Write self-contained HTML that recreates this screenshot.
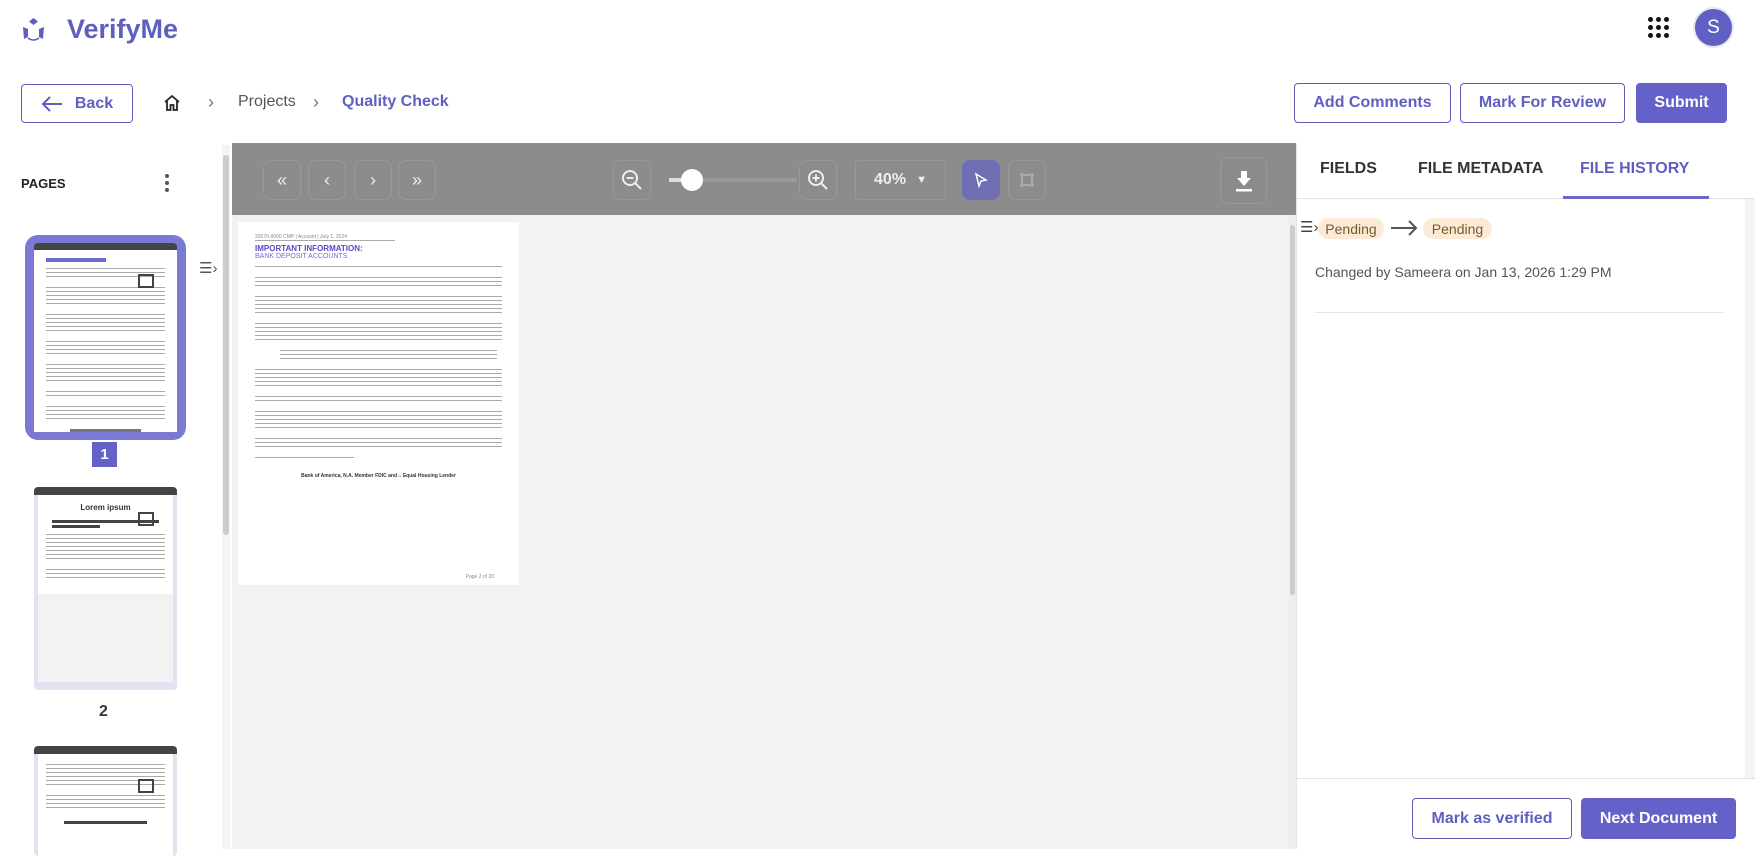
<!DOCTYPE html>
<html><head><meta charset="utf-8"><style>
*{box-sizing:border-box;margin:0;padding:0}
body{width:1755px;height:849px;overflow:hidden;background:#fff;font-family:"Liberation Sans",Arial,sans-serif;position:relative;color:#333}
.a{position:absolute}
.btn{position:absolute;border:1px solid #5f5fb8;border-radius:4px;color:#5f5fc0;font-weight:bold;font-size:16px;display:flex;align-items:center;justify-content:center;background:#fff}
.fill{background:#6462c8;color:#fff;border-color:#6462c8}
.tb{position:absolute;top:160px;width:38px;height:40px;border:1px solid #999;border-radius:8px;display:flex;align-items:center;justify-content:center;color:#eee;font-size:18px}
.line{height:2px;background:#ccc;margin:3px 0}
.tab{position:absolute;top:160px;font-size:16px;font-weight:bold;color:#333}
.tx{background:repeating-linear-gradient(#aaa 0 1px,transparent 1px 4px);margin-bottom:7px}
</style></head><body>
<!-- header -->
<svg class="a" style="left:21px;top:17px" width="25" height="25" viewBox="0 0 25 25"><path d="M12.5 1 L17 4.5 L12.5 8 L8 4.5Z" fill="#5f5fc0"/><path d="M2 10 L7 12 L7 20 L3 22 Z" fill="#5f5fc0"/><path d="M23 10 L18 12 L18 20 L22 22 Z" fill="#5f5fc0"/><path d="M7 21 Q12.5 25 18 21" stroke="#5f5fc0" stroke-width="1.5" fill="none"/></svg>
<div class="a" style="left:67px;top:14px;font-size:27px;font-weight:bold;color:#5f5fc0">VerifyMe</div>
<div class="a" style="left:1648px;top:17px;width:24px;height:24px;display:grid;grid-template-columns:repeat(3,8px);grid-template-rows:repeat(3,8px)">
<i style="width:5px;height:5px;background:#111;border-radius:50%"></i><i style="width:5px;height:5px;background:#111;border-radius:50%"></i><i style="width:5px;height:5px;background:#111;border-radius:50%"></i><i style="width:5px;height:5px;background:#111;border-radius:50%"></i><i style="width:5px;height:5px;background:#111;border-radius:50%"></i><i style="width:5px;height:5px;background:#111;border-radius:50%"></i><i style="width:5px;height:5px;background:#111;border-radius:50%"></i><i style="width:5px;height:5px;background:#111;border-radius:50%"></i><i style="width:5px;height:5px;background:#111;border-radius:50%"></i></div>
<div class="a" style="left:1695px;top:9px;width:37px;height:37px;border-radius:50%;background:#5f5fc4;color:#fff;font-size:19px;display:flex;align-items:center;justify-content:center;box-shadow:0 0 0 2px #e8e8f4">S</div>

<div class="btn" style="left:21px;top:84px;width:112px;height:39px"><svg width="22" height="16" viewBox="0 0 22 16" style="margin-right:12px"><path d="M21 8H2M9 1L2 8l7 7" stroke="#5f5fc0" stroke-width="2" fill="none"/></svg>Back</div>
<svg class="a" style="left:162px;top:93px" width="20" height="20" viewBox="0 0 20 20"><path d="M3 9 L10 3 L17 9 M5 8 V17 H8.5 V12 H11.5 V17 H15 V8" stroke="#222" stroke-width="1.8" fill="none"/></svg>
<div class="a" style="left:208px;top:92px;font-size:18px;color:#777">›</div>
<div class="a" style="left:238px;top:93px;font-size:16px;color:#555">Projects</div>
<div class="a" style="left:313px;top:92px;font-size:18px;color:#777">›</div>
<div class="a" style="left:342px;top:93px;font-size:16px;color:#5f5fc0;font-weight:bold">Quality Check</div>
<div class="btn" style="left:1294px;top:83px;width:157px;height:40px">Add Comments</div>
<div class="btn" style="left:1460px;top:83px;width:165px;height:40px">Mark For Review</div>
<div class="btn fill" style="left:1636px;top:83px;width:91px;height:40px">Submit</div>

<!-- left panel -->
<div class="a" style="left:21px;top:176px;font-size:13px;font-weight:bold;color:#222">PAGES</div>
<div class="a" style="left:165px;top:174px;width:4px;font-size:0">
<i style="display:block;width:4px;height:4px;border-radius:50%;background:#555;margin-bottom:3px"></i><i style="display:block;width:4px;height:4px;border-radius:50%;background:#555;margin-bottom:3px"></i><i style="display:block;width:4px;height:4px;border-radius:50%;background:#555"></i></div>
<div class="a" style="left:222px;top:145px;width:8px;height:704px;background:#f4f4f4"></div>
<div class="a" style="left:223px;top:155px;width:6px;height:380px;background:#ccc;border-radius:3px"></div>
<div class="a" style="left:199px;top:259px;font-size:15px;color:#555">☰›</div>

<div class="a" style="left:25px;top:235px;width:161px;height:205px;background:#7a79d4;border-radius:13px"></div>
<div class="a" style="left:34px;top:243px;width:143px;height:189px;background:#fff;border-top:7px solid #444;border-radius:4px 4px 0 0;padding:8px 12px">
<div style="height:4px;background:#6b6bd0;width:50%;margin-bottom:6px"></div>
<div class="tx" style="height:12px"></div><div class="tx" style="height:20px"></div><div class="tx" style="height:20px"></div><div class="tx" style="height:16px"></div><div class="tx" style="height:20px"></div><div class="tx" style="height:8px"></div><div class="tx" style="height:16px"></div>
<div style="height:3px;background:#777;width:60%;margin:6px auto"></div>
<div style="position:absolute;left:104px;top:24px;width:16px;height:14px;border:2px solid #444"></div></div>
<div class="a" style="left:92px;top:442px;width:25px;height:25px;background:#6462c8;color:#fff;font-weight:bold;font-size:15px;display:flex;align-items:center;justify-content:center">1</div>

<div class="a" style="left:34px;top:487px;width:143px;height:203px;background:#e2e2f2;border-radius:4px;border-top:8px solid #444;padding:0 4px 4px"><div style="background:#fff;height:99px;padding:8px;text-align:center;font-size:8px;font-weight:bold">Lorem ipsum<div style="height:3px;background:#444;margin:8px 6px 2px"></div><div style="height:3px;background:#444;width:40%;margin:0 6px 6px"></div><div class="tx" style="height:28px"></div><div class="tx" style="height:12px"></div></div><div style="background:#f2f2f2;height:88px"></div>
<div style="position:absolute;left:104px;top:17px;width:16px;height:14px;border:2px solid #444"></div></div>
<div class="a" style="left:99px;top:703px;font-size:16px;font-weight:bold">2</div>
<div class="a" style="left:34px;top:746px;width:143px;height:110px;background:#e2e2f2;border-radius:4px;border-top:8px solid #444;padding:0 4px"><div style="background:#fff;height:110px;padding:10px 8px"><div class="tx" style="height:24px"></div><div class="tx" style="height:16px"></div><div style="height:3px;background:#444;width:70%;margin:10px auto"></div></div>
<div style="position:absolute;left:104px;top:25px;width:16px;height:14px;border:2px solid #444"></div></div>

<!-- viewer -->
<div class="a" style="left:232px;top:143px;width:1064px;height:706px;background:#f2f2f2"></div>
<div class="a" style="left:232px;top:143px;width:1064px;height:72px;background:#8c8c8c"></div>
<div class="tb" style="left:263px">«</div><div class="tb" style="left:308px">‹</div><div class="tb" style="left:354px">›</div><div class="tb" style="left:398px">»</div>
<div class="tb" style="left:613px"><svg width="22" height="22" viewBox="0 0 22 22"><circle cx="9" cy="9" r="7" stroke="#eee" stroke-width="2" fill="none"/><path d="M5.5 9h7M14 14l6 6" stroke="#eee" stroke-width="2"/></svg></div>
<div class="a" style="left:669px;top:178px;width:128px;height:4px;background:#9a9a9a;border-radius:2px"></div>
<div class="a" style="left:669px;top:178px;width:23px;height:4px;background:#ddd"></div>
<div class="a" style="left:681px;top:169px;width:22px;height:22px;border-radius:50%;background:#fff"></div>
<div class="tb" style="left:799px"><svg width="22" height="22" viewBox="0 0 22 22"><circle cx="9" cy="9" r="7" stroke="#eee" stroke-width="2" fill="none"/><path d="M5.5 9h7M9 5.5v7M14 14l6 6" stroke="#eee" stroke-width="2"/></svg></div>
<div class="tb" style="left:855px;width:91px;font-size:16px;font-weight:bold;border-radius:4px">40% <span style="font-size:11px;margin-left:10px">▼</span></div>
<div class="tb" style="left:962px;background:#6f6db4;border-color:#6f6db4"><svg width="16" height="16" viewBox="0 0 16 16"><path d="M3 2 L13 8 L8 9 L6 14Z" stroke="#fff" stroke-width="1.5" fill="none"/></svg></div>
<div class="tb" style="left:1008px"><svg width="16" height="16" viewBox="0 0 16 16"><rect x="3" y="3" width="10" height="10" stroke="#ccc" fill="none"/><circle cx="3" cy="3" r="2" fill="#aaa"/><circle cx="13" cy="3" r="2" fill="#aaa"/><circle cx="3" cy="13" r="2" fill="#aaa"/><circle cx="13" cy="13" r="2" fill="#aaa"/></svg></div>
<div class="tb" style="left:1220px;top:157px;width:47px;height:47px"><svg width="20" height="22" viewBox="0 0 20 22"><path d="M7 1h6v7h4l-7 8-7-8h4z" fill="#fff"/><rect x="2" y="19" width="16" height="2.5" fill="#fff"/></svg></div>

<div class="a" style="left:238px;top:222px;width:281px;height:363px;background:#fff;padding:12px 17px;font-size:5px;color:#888">
<div style="border-bottom:1px solid #aaa;width:140px;margin-bottom:3px">33570-9000 CMP | Account | July 1, 2024</div>
<div style="color:#5a48c8;font-size:8px;font-weight:bold">IMPORTANT INFORMATION:</div>
<div style="color:#7a6ad0;font-size:7px;margin-bottom:6px">BANK DEPOSIT ACCOUNTS</div>
<div class="tx" style="height:4px"></div>
<div class="tx" style="height:12px"></div>
<div class="tx" style="height:20px"></div>
<div class="tx" style="height:20px"></div>
<div class="tx" style="height:12px;margin-left:10%;width:88%"></div>
<div class="tx" style="height:20px"></div>
<div class="tx" style="height:8px"></div>
<div class="tx" style="height:20px"></div>
<div class="tx" style="height:12px"></div>
<div class="tx" style="height:4px;width:40%"></div>
<div style="text-align:center;margin-top:12px;font-weight:bold;color:#333">Bank of America, N.A. Member FDIC and ⌂ Equal Housing Lender</div>
<div style="position:absolute;right:25px;bottom:5px">Page 2 of 20</div>
</div>
<div class="a" style="left:1289px;top:215px;width:7px;height:634px;background:#eee"></div>
<div class="a" style="left:1290px;top:225px;width:5px;height:370px;background:#ccc;border-radius:3px"></div>

<!-- right panel -->
<div class="a" style="left:1296px;top:143px;width:459px;height:706px;background:#fff;border-left:1px solid #e5e5e5"></div>
<div class="tab" style="left:1320px">FIELDS</div>
<div class="tab" style="left:1418px">FILE METADATA</div>
<div class="tab" style="left:1580px;color:#5f5fc0">FILE HISTORY</div>
<div class="a" style="left:1296px;top:198px;width:459px;height:1px;background:#e3e3e3"></div>
<div class="a" style="left:1563px;top:196px;width:146px;height:3px;background:#6a68c8"></div>
<div class="a" style="left:1745px;top:199px;width:10px;height:579px;background:#f3f3f3"></div>
<div class="a" style="left:1300px;top:218px;font-size:15px;color:#444">☰›</div>
<div class="a" style="left:1318px;top:218px;width:66px;height:21px;border-radius:11px;background:#fbebd6;color:#7a5a2c;font-size:14px;display:flex;align-items:center;justify-content:center">Pending</div>
<svg class="a" style="left:1390px;top:220px" width="28" height="16" viewBox="0 0 28 16"><path d="M1 8H26M19 1l7 7-7 7" stroke="#555" stroke-width="2" fill="none"/></svg>
<div class="a" style="left:1423px;top:218px;width:69px;height:21px;border-radius:11px;background:#fbebd6;color:#7a5a2c;font-size:14px;display:flex;align-items:center;justify-content:center">Pending</div>
<div class="a" style="left:1315px;top:264px;font-size:14px;color:#555">Changed by Sameera on Jan 13, 2026 1:29 PM</div>
<div class="a" style="left:1315px;top:312px;width:408px;height:1px;background:#e3e3e3"></div>
<div class="a" style="left:1296px;top:778px;width:459px;height:1px;background:#e3e3e3"></div>
<div class="btn" style="left:1412px;top:798px;width:160px;height:41px">Mark as verified</div>
<div class="btn fill" style="left:1581px;top:798px;width:155px;height:41px">Next Document</div>
</body></html>
